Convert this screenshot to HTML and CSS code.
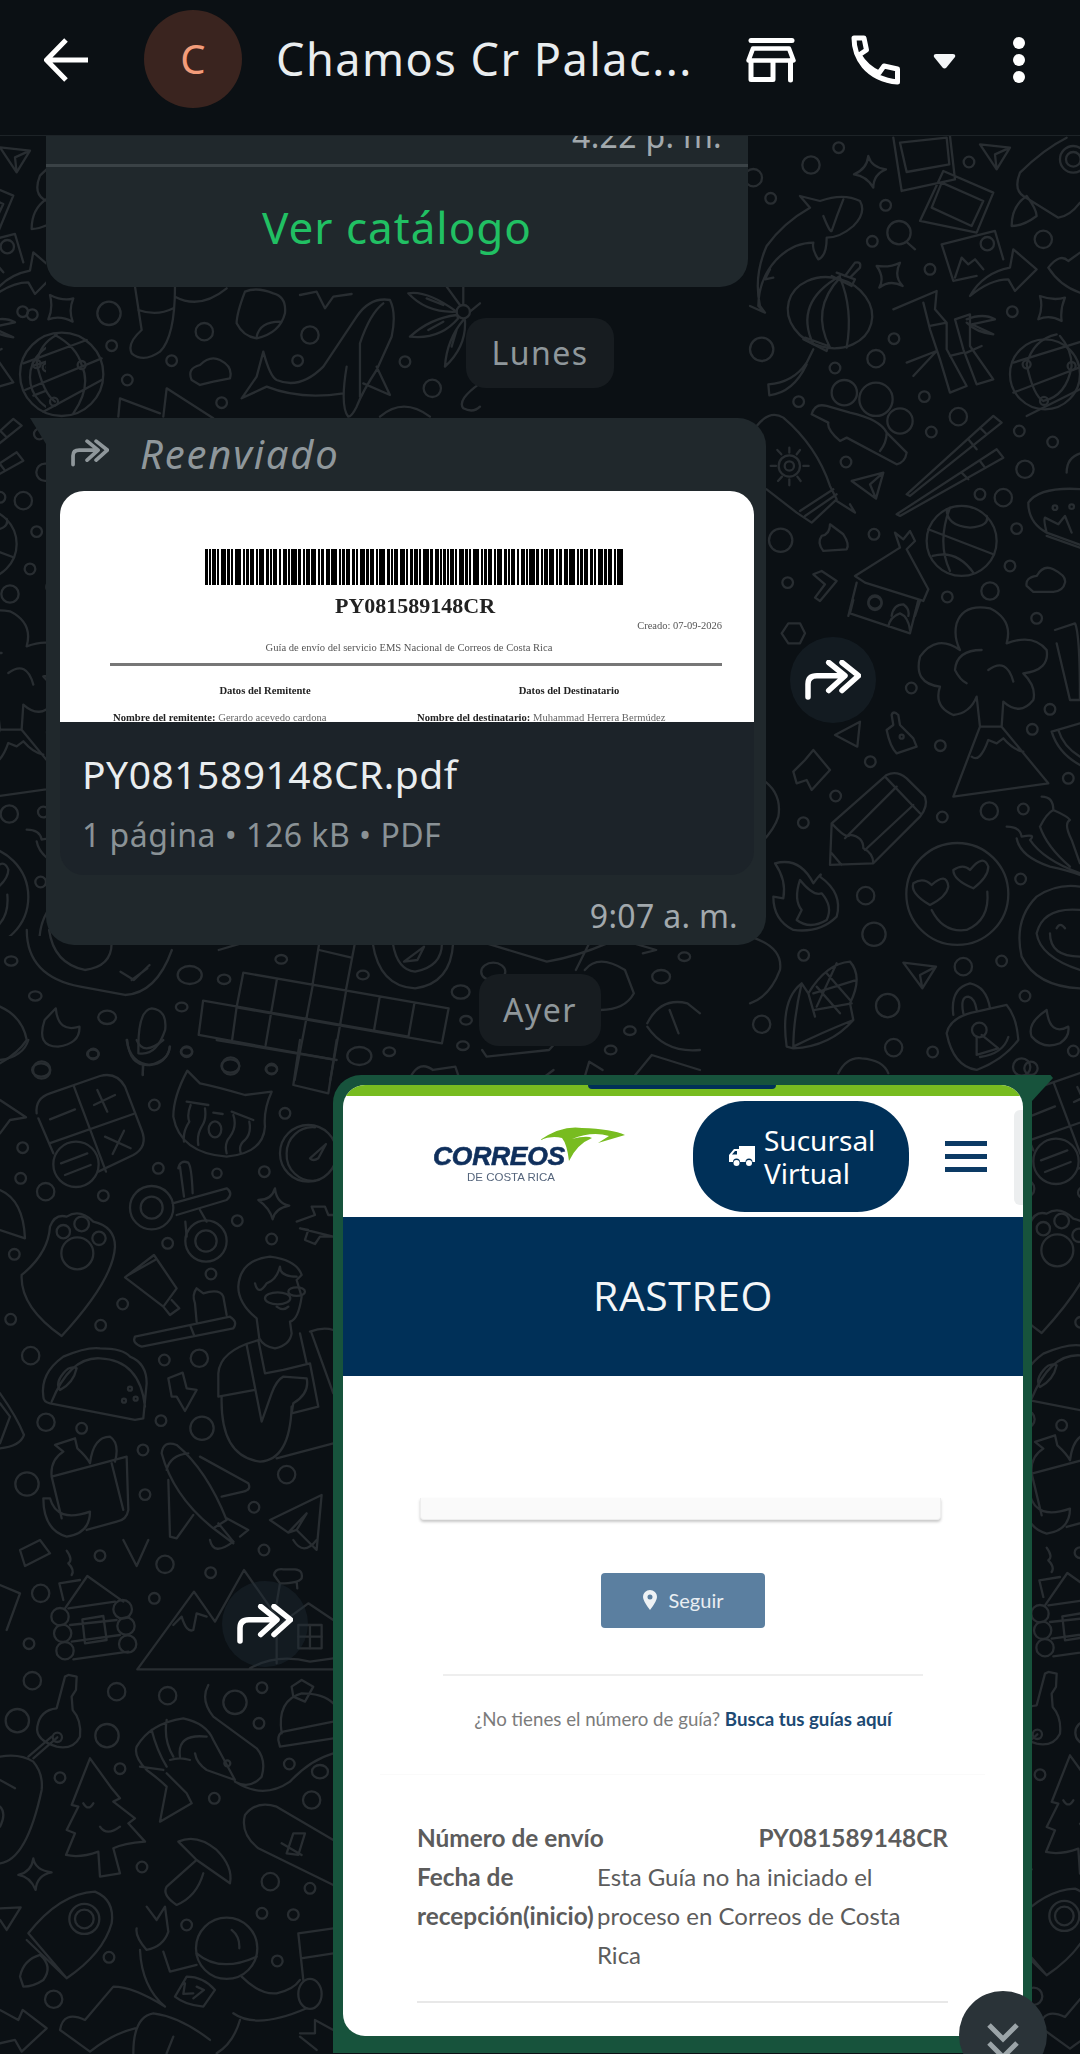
FILE: index.html
```html
<!DOCTYPE html>
<html lang="es">
<head>
  <meta charset="UTF-8">
  <meta name="viewport" content="width=device-width, initial-scale=1.0">
  <title>Chamos Cr Palac...</title>
  <link rel="stylesheet" href="styles.css">
</head>
<body>
  <svg width="0" height="0" class="defs">
    <symbol id="fwd" viewBox="0 0 56 40">
      <path d="M3 37V24Q3 15.700 12 15.700H38M23.700 2.500L40 15.700L23.700 30.500M37 2.500L53.500 15.700L37 30.500" fill="none" stroke="currentColor" stroke-width="5.500" stroke-linecap="round" stroke-linejoin="round"/>
    </symbol>
  </svg>

  <div class="screen">
    <!-- wallpaper, drawn in the pixel space of each part of the screen -->
    <svg class="doodles" width="1080" height="2054" viewBox="0 0 1080 2054">
      <g id="wall-left-top" transform="translate(0 1040) scale(.3333)">
        <path d="M110 220Q105 175 150 160L300 108Q350 95 375 140L425 270Q445 320 400 345L295 395M160 340L115 235M222 140L318 395M148 310L400 222M292 150L322 215M282 195L345 165M150 238L225 208M315 290L392 325M372 272L338 342M183 370L262 340M195 405L272 375"/>
        <circle cx="228" cy="373" r="68"/>
        <path d="M520 230Q520 170 562 92L600 130Q650 140 735 165L815 155Q790 210 795 260Q790 340 680 350Q540 340 520 230ZM560 185L625 195M695 215L760 240M572 195Q560 225 568 245Q548 275 552 305M615 205Q620 240 605 260Q590 285 595 315M700 225Q712 260 690 290Q672 310 680 340M748 245Q755 280 735 300Q715 315 722 338M640 218L668 222"/>
        <ellipse cx="645" cy="268" rx="19" ry="24"/>
        <circle cx="925" cy="340" r="85"/>
        <path d="M945 262A78 78 0 0 0 860 340A78 78 0 0 0 945 422M930 355L978 312L955 355Q940 365 930 355Z"/>
        <circle cx="455" cy="503" r="65"/><circle cx="455" cy="503" r="33"/>
        <circle cx="618" cy="603" r="62"/><circle cx="618" cy="603" r="32"/>
        <path d="M518 490L680 445Q702 460 680 480L530 525M535 385Q540 358 565 368Q575 380 578 460M600 510L620 545M556 545L560 590M540 380L552 470"/>
        <path d="M825 445Q830 490 868 497Q825 505 818 538Q810 505 775 480Q815 480 825 445Z"/>
        <path d="M890 545L945 525L935 500L975 500L985 525L1000 525M1000 590L960 590L945 612L915 600L925 570L900 565Z"/>
        <path d="M65 705Q145 640 150 560Q165 520 200 530Q240 505 280 545Q345 560 345 620Q340 720 185 888Q60 800 65 705Z"/>
        <circle cx="190" cy="575" r="20"/><circle cx="245" cy="552" r="22"/><circle cx="297" cy="595" r="20"/><circle cx="232" cy="640" r="48"/>
        <path d="M462 645L375 712L490 800L530 745ZM490 800L510 825L538 805L515 780M385 705L465 660"/>
        <path d="M405 890L690 830Q715 845 700 865L425 920Q395 910 405 890ZM572 860L582 885M590 845L585 790Q575 765 590 745L610 760Q660 745 670 770L680 825"/>
        <path d="M770 835Q715 790 715 740Q720 660 810 650Q890 660 905 705L890 720L905 770Q895 840 870 845L875 880Q870 915 825 925Q790 920 778 895L770 835M765 730Q775 770 800 730Q830 720 840 680Q840 710 890 710M830 800Q850 815 865 800"/>
        <ellipse cx="833" cy="775" rx="38" ry="18"/><ellipse cx="890" cy="755" rx="25" ry="13"/>
        <path d="M778 900Q660 930 655 1000L655 1070L765 1050M665 1070Q660 1250 780 1265Q870 1260 875 1100M740 915L785 1145L815 1060Q830 1020 850 1010L920 1015Q930 1060 880 1090L875 1120L955 1100L930 970L850 990L795 1000L775 900M900 880L920 970M930 875Q970 860 1000 870M935 880L1000 1060M830 1255L1000 1210"/>
        <path d="M130 1070Q120 1000 190 950Q260 920 300 925Q370 925 390 950Q440 970 440 1030L430 1135L405 1140L150 1090Q130 1085 130 1070ZM155 1085Q210 950 300 955Q420 960 435 1100M190 1000Q165 1030 180 1050Q220 1030 230 985Q210 975 190 1000Z"/>
        <circle cx="390" cy="1046" r="6"/><circle cx="372" cy="1082" r="6"/><circle cx="407" cy="1076" r="6"/>
        <path d="M505 1015L548 998L560 1045L590 1050L555 1113L530 1070L515 1070Z"/>
        <path d="M155 1310L380 1250L385 1410Q380 1440 350 1445L260 1470M185 1435L155 1310Q150 1260 190 1235L165 1215L225 1195L232 1225Q260 1250 270 1270Q280 1190 330 1190Q360 1210 345 1265M335 1270L370 1410M130 1375L150 1375Q170 1450 270 1415Q270 1480 200 1490Q130 1470 130 1375Z"/>
        <path d="M485 1240Q490 1200 530 1215Q620 1290 680 1440L640 1465Q520 1370 485 1240ZM600 1250L745 1330Q755 1350 730 1355L665 1370M505 1320L510 1490L530 1495L580 1425M500 1290Q510 1245 565 1240M640 1465L700 1510M655 1450L700 1505M680 1435L745 1470L720 1490"/>
        <path d="M810 1440L965 1365L950 1530L890 1470L865 1478ZM865 1478L920 1420L890 1470"/>
        <path d="M650 0L1010 60M900 0L880 135L985 160L1010 0M0 60Q70 50 85 0M380 0Q390 70 450 75Q500 70 510 20M430 75L428 105M410 0Q430 50 490 0"/>
        <path d="M0 180L78 232L30 240L0 280M0 450Q70 480 75 595L0 570M0 1060Q50 1130 72 1185Q60 1220 0 1225M0 1090L30 1130L0 1210"/>
        <circle cx="125" cy="90" r="26"/><circle cx="280" cy="42" r="16"/><circle cx="560" cy="35" r="16"/><circle cx="692" cy="78" r="26"/><circle cx="815" cy="87" r="16"/><circle cx="463" cy="195" r="16"/><circle cx="855" cy="220" r="16"/><circle cx="68" cy="323" r="16"/><circle cx="62" cy="415" r="16"/><circle cx="137" cy="455" r="26"/><circle cx="310" cy="467" r="16"/><circle cx="475" cy="385" r="16"/><circle cx="651" cy="400" r="14"/><circle cx="793" cy="395" r="16"/><circle cx="712" cy="542" r="16"/><circle cx="503" cy="610" r="16"/><circle cx="815" cy="597" r="16"/><circle cx="43" cy="643" r="16"/><circle cx="633" cy="702" r="16"/><circle cx="368" cy="792" r="16"/><circle cx="32" cy="838" r="16"/><circle cx="302" cy="856" r="16"/><circle cx="92" cy="947" r="26"/><circle cx="493" cy="960" r="16"/><circle cx="598" cy="955" r="26"/><circle cx="138" cy="1147" r="26"/><circle cx="245" cy="1165" r="16"/><circle cx="483" cy="1142" r="16"/><circle cx="606" cy="1165" r="35"/><circle cx="429" cy="1230" r="16"/><circle cx="81" cy="1332" r="35"/><circle cx="435" cy="1364" r="16"/><circle cx="860" cy="1304" r="26"/><circle cx="762" cy="1402" r="16"/>
      </g>

      <g id="wall-left-bottom" transform="translate(0 1540) scale(.3333)">
        <path d="M195 205L262 108L370 185M200 32Q220 60 205 70Q225 90 215 105M190 180L178 130L240 120M205 205L345 185M210 255L350 240M215 305L360 285M220 358L385 335M247 238L310 228L320 300L255 310Z"/>
        <circle cx="180" cy="230" r="26"/><circle cx="188" cy="280" r="26"/><circle cx="195" cy="332" r="26"/><circle cx="368" cy="208" r="28"/><circle cx="378" cy="258" r="26"/><circle cx="383" cy="312" r="26"/>
        <path d="M412 388L582 155L645 245L732 90L830 230M412 388L1000 388M520 255L545 230Q560 280 580 270L590 220L620 230M822 105Q825 85 850 88L885 88Q910 90 905 115Q895 130 840 130ZM840 130L830 190M890 125L892 145M1000 240L925 190L830 260L830 370M930 255V325M895 290H965M750 385Q830 340 930 365L1000 355"/>
        <rect x="895" y="255" width="70" height="70"/>
        <path d="M205 405L230 410L228 450L215 470L218 510Q245 540 240 590Q220 630 170 620Q105 600 112 560Q120 510 170 505L195 410ZM172 592L100 655M155 590L85 650"/>
        <circle cx="172" cy="592" r="14"/>
        <path d="M0 650Q60 640 100 665Q130 700 125 750Q80 960 0 970M0 720L45 745M0 860Q20 820 0 800"/>
        <path d="M100 955Q105 990 155 997Q110 1005 107 1050Q90 1010 55 1005Q95 995 100 955Z"/>
        <path d="M270 655L335 745L360 775L340 785L405 835L385 850L435 905Q370 910 340 925L360 1000L300 1010L295 935Q240 955 198 945L225 880L200 870L235 800L215 795ZM250 790Q265 815 280 790M300 860Q320 890 360 860"/>
        <path d="M440 690Q400 650 410 620Q450 550 550 535Q620 550 640 600L705 720L620 690Q590 670 585 640M440 690Q480 720 500 740L480 845L575 790L560 760L500 700M500 540Q490 600 520 650M455 570Q470 630 500 680M420 680L490 690M540 650Q530 580 620 590M510 660Q540 650 570 660"/>
        <circle cx="682" cy="670" r="9"/>
        <path d="M625 435Q600 480 640 530L770 625Q800 660 785 710Q750 750 705 725Q790 780 870 725Q930 660 1000 640"/>
        <ellipse cx="960" cy="695" rx="24" ry="20"/>
        <path d="M845 580Q830 480 905 460Q970 460 1000 490M835 600Q835 580 850 575L1000 545M840 620L1000 595M835 600L840 620M875 440L905 420L940 440L915 485L880 470Z"/>
        <path d="M1000 900L830 800Q770 780 735 825Q720 880 775 925L1000 1035M880 880L915 880L895 945L860 940ZM845 910L905 945"/>
        <path d="M535 905Q590 880 650 930Q700 980 690 1030L590 960ZM590 960L500 1040Q485 1065 530 1095Q590 1070 610 1000"/>
        <path d="M85 1180Q180 1060 285 1055Q345 1080 335 1150Q310 1240 200 1315ZM80 1200L200 1315M60 1310Q70 1260 120 1245Q160 1280 130 1320Q100 1340 70 1340Z"/>
        <circle cx="253" cy="1137" r="45"/><circle cx="253" cy="1137" r="28"/>
        <circle cx="680" cy="1225" r="92"/>
        <path d="M590 1240Q660 1300 770 1250M695 1170Q720 1190 718 1225M440 1100L470 1140L495 1100L505 1175Q490 1220 440 1230Q405 1190 410 1165M420 1230Q425 1340 495 1400M490 1235L510 1295L590 1275M495 1400Q400 1340 340 1340L255 1440Q190 1410 180 1470L270 1535Q340 1480 405 1465M400 1540Q400 1430 460 1420Q540 1430 630 1500M725 1310Q780 1365 830 1360Q880 1350 900 1320M700 1420Q770 1470 920 1405M895 1180L1000 1165M895 1180L910 1320M903 1255L1000 1240M500 1540L520 1490M720 1440Q700 1510 650 1540M525 1370L560 1310Q610 1310 645 1350L610 1400Q555 1395 525 1370ZM555 1330L550 1362L580 1360M590 1340L612 1350L580 1375"/>
        <ellipse cx="930" cy="1362" rx="35" ry="45"/>
        <path d="M0 1410L55 1440L68 1410L140 1465L65 1535L45 1500L0 1510M900 1480L945 1480L945 1440L1000 1470M900 1490L950 1530"/>
        <path d="M0 1105L62 1102L20 1170L0 1140M0 135L60 160L20 270"/>
        <path d="M60 30L120 0L150 40L75 78ZM630 0Q640 50 700 5M880 0Q910 50 950 0M370 0L410 78L445 0"/>
        <circle cx="122" cy="160" r="26"/><circle cx="300" cy="47" r="16"/><circle cx="495" cy="73" r="26"/><circle cx="632" cy="98" r="16"/><circle cx="792" cy="30" r="16"/><circle cx="463" cy="175" r="16"/><circle cx="87" cy="311" r="16"/><circle cx="97" cy="422" r="26"/><circle cx="350" cy="455" r="26"/><circle cx="503" cy="467" r="26"/><circle cx="705" cy="487" r="35"/><circle cx="786" cy="443" r="16"/><circle cx="777" cy="550" r="16"/><circle cx="52" cy="542" r="35"/><circle cx="321" cy="587" r="35"/><circle cx="180" cy="713" r="16"/><circle cx="360" cy="686" r="16"/><circle cx="868" cy="672" r="16"/><circle cx="935" cy="780" r="26"/><circle cx="643" cy="775" r="16"/><circle cx="426" cy="981" r="16"/><circle cx="811" cy="1025" r="26"/><circle cx="930" cy="1045" r="16"/><circle cx="786" cy="1120" r="16"/><circle cx="880" cy="1124" r="16"/><circle cx="560" cy="1155" r="16"/><circle cx="327" cy="1252" r="16"/><circle cx="832" cy="1263" r="16"/><circle cx="161" cy="1378" r="26"/>
      </g>

      <g id="wall-right-top" transform="translate(750 136) scale(.3333)">
        <path d="M30 510Q10 420 50 330Q100 260 180 215L150 180Q190 190 210 195Q280 170 330 195Q350 230 310 270Q270 305 230 305Q230 360 205 370Q185 340 190 320Q130 320 80 370Q25 430 25 510L45 530ZM220 240Q240 290 245 285Q260 240 280 190M0 510L45 530M60 400L45 430L70 425"/>
        <circle cx="447" cy="290" r="35"/>
        <path d="M470 318L495 340M355 60Q365 95 408 100Q370 115 370 155Q350 120 312 115Q350 100 355 60ZM380 390Q420 395 450 380Q430 420 458 450Q420 430 388 455Q405 425 380 390ZM430 5L455 165L615 130L600 0M450 20L590 5L598 85L470 108ZM580 105L730 170L680 290L510 255ZM575 140L700 195L665 270L545 215ZM575 325L735 285L760 370M575 325L610 435L680 420M615 425L635 365L655 385L675 370L700 400M660 480Q700 410 780 395L790 340L860 400L795 465L775 430Q720 430 660 480Z"/>
        <circle cx="712" cy="323" r="20"/>
        <ellipse cx="240" cy="530" rx="128" ry="105" transform="rotate(15 240 530)"/>
        <path d="M190 625Q130 500 270 420M240 635Q180 520 270 425M290 635Q310 520 270 425M160 610L230 645L235 630L165 605M245 420L305 450L315 430L260 410M285 420L315 380Q335 375 330 395L300 425M190 640L170 680Q130 740 55 745L58 778Q130 770 170 685"/>
        <path d="M430 520L560 465L555 520L590 560L590 640L650 750L600 770L570 670L540 580L520 500M615 550L660 535L660 630L730 730L680 745L640 640ZM470 680L560 645L490 720M540 570L590 560M600 660L640 650M650 650L695 630M650 550Q700 530 735 550L665 565L730 595Q680 590 650 560"/>
        <circle cx="885" cy="715" r="105"/>
        <path d="M790 680L1000 615M790 770L1000 690M830 840L990 760M830 685Q850 780 880 795M965 690Q950 780 880 795M830 685Q850 610 920 595M965 690Q965 640 930 600"/>
        <circle cx="830" cy="685" r="12"/><circle cx="965" cy="690" r="12"/><circle cx="882" cy="795" r="12"/>
        <circle cx="283" cy="770" r="38"/><circle cx="378" cy="790" r="50"/><circle cx="450" cy="855" r="38"/>
        <path d="M185 835Q195 800 230 810L300 830Q390 850 410 890L470 950Q465 980 440 985L290 905L270 915Q230 880 235 860ZM410 890Q410 920 390 945M20 870Q60 820 100 845Q200 930 240 1050L260 1090L185 1160L140 1130L50 1060M150 1125L250 1060M165 1140L260 1075M260 1095L315 1130L300 1105"/>
        <circle cx="118" cy="990" r="32"/><circle cx="118" cy="990" r="14"/>
        <path d="M118 935V950M118 1030V1048M62 990H78M160 990H176M82 942L94 955M150 942L140 955M84 1035L96 1022M152 1035L142 1022"/>
        <path d="M470 1075L730 840L755 860L480 1080ZM655 910L680 940M690 875L710 895M440 1135L740 940L760 965L450 1140ZM635 1010L655 1030M690 975L705 995"/>
        <circle cx="635" cy="1215" r="105"/>
        <path d="M535 1180L730 1255M590 1120Q590 1170 660 1175Q720 1170 710 1140M548 1260Q620 1240 670 1310M600 1115Q560 1220 600 1305"/>
        <path d="M305 1035L400 1010L378 1088ZM378 1088L360 1045L400 1010M315 1320L450 1235L435 1190L460 1210L480 1185L495 1215L470 1240L535 1360L520 1395L345 1340ZM320 1340L295 1440M510 1395L495 1440M425 1440Q430 1405 460 1405Q480 1420 475 1440"/>
        <circle cx="375" cy="1398" r="20"/>
        <path d="M830 1350Q825 1325 860 1320Q880 1285 910 1300Q950 1320 945 1340Q940 1365 910 1368L850 1368ZM835 1100Q870 1050 1000 1060M835 1100Q835 1160 890 1190L1000 1230M890 1190Q880 1150 885 1145L925 1165L945 1140L965 1190M890 1200L990 1235M950 1010Q950 960 1000 950"/>
        <circle cx="915" cy="1115" r="7"/><circle cx="965" cy="1112" r="7"/>
        <path d="M810 110Q880 40 950 5M810 110Q790 160 820 180L925 245Q960 240 990 200M785 270Q785 210 830 180Q860 220 860 240Q820 270 785 270Z"/>
        <circle cx="970" cy="70" r="40"/><circle cx="970" cy="70" r="22"/>
        <path d="M690 25L780 35L740 100ZM740 100L735 55L780 35M870 480Q910 495 945 485Q930 520 935 555Q900 535 865 550Q880 515 870 480ZM895 395Q930 350 955 375L990 350M895 395Q930 450 990 470"/>
        <path d="M240 1165Q260 1180 280 1195Q300 1225 290 1240L220 1245Q200 1220 215 1200Q240 1195 240 1165ZM190 1315L215 1305L260 1335L210 1395L195 1385L225 1345Z"/>
        <circle cx="10" cy="125" r="26"/><circle cx="183" cy="87" r="26"/><circle cx="266" cy="35" r="16"/><circle cx="657" cy="78" r="16"/><circle cx="62" cy="187" r="16"/><circle cx="407" cy="208" r="16"/><circle cx="367" cy="316" r="16"/><circle cx="540" cy="400" r="16"/><circle cx="880" cy="310" r="26"/><circle cx="787" cy="527" r="16"/><circle cx="432" cy="608" r="16"/><circle cx="35" cy="640" r="35"/><circle cx="378" cy="668" r="26"/><circle cx="255" cy="696" r="16"/><circle cx="523" cy="782" r="16"/><circle cx="146" cy="797" r="16"/><circle cx="625" cy="842" r="26"/><circle cx="544" cy="888" r="16"/><circle cx="808" cy="885" r="16"/><circle cx="908" cy="918" r="16"/><circle cx="288" cy="978" r="16"/><circle cx="825" cy="1000" r="26"/><circle cx="690" cy="1075" r="16"/><circle cx="760" cy="1085" r="26"/><circle cx="800" cy="1178" r="16"/><circle cx="92" cy="1213" r="35"/><circle cx="372" cy="1195" r="16"/><circle cx="113" cy="1340" r="16"/><circle cx="780" cy="1290" r="16"/><circle cx="720" cy="1365" r="26"/><circle cx="592" cy="1383" r="16"/>
      </g>

      <g id="wall-right-bottom" transform="translate(750 600) scale(.3333)">
        <path d="M630 150Q560 100 510 170Q490 250 570 260Q550 320 610 345Q660 340 680 290L690 380L610 590L895 550L755 380L760 305Q810 350 850 300Q860 260 820 220Q900 210 890 150Q850 100 770 130Q790 60 720 25Q640 10 620 70Q610 110 630 150M695 150Q620 150 615 210Q630 240 650 250M715 210Q770 170 790 245M690 380L755 380M665 470Q690 490 715 420L740 430L760 415Q790 450 820 455"/>
        <path d="M240 795L245 670L410 525Q440 510 470 535L525 590Q535 620 510 650L370 790ZM405 530L510 640M285 715L440 560M345 750L490 615M245 670Q290 720 300 705Q340 710 340 745Q370 760 370 790M245 760L275 795"/>
        <path d="M75 790Q150 770 190 850Q220 810 210 830Q280 880 260 950Q210 1000 130 990Q70 960 70 890L100 895Q110 840 75 790ZM150 840Q130 900 155 930L140 960Q180 990 230 960Q250 920 215 880Q190 890 150 840Z"/>
        <circle cx="622" cy="882" r="153"/>
        <path d="M540 915Q480 880 490 850Q520 830 545 855Q590 815 595 860Q590 890 540 915ZM670 865Q610 840 610 810Q640 790 660 810Q700 760 715 800Q715 830 670 865ZM545 930Q580 1000 650 990Q720 960 712 875"/>
        <path d="M990 1165Q860 1160 815 1070Q790 960 860 890Q920 850 990 860M990 930Q880 920 860 1000Q870 1070 990 1110M900 1000Q900 1070 990 1070M920 985Q930 965 945 985"/>
        <path d="M425 345Q430 330 445 345L450 375L490 415L500 440L440 460Q420 440 410 390L430 375Z"/>
        <circle cx="455" cy="410" r="6"/>
        <path d="M130 515L165 480L190 450L240 510L185 570L170 540L140 550Z"/>
        <path d="M110 1340Q90 1200 155 1150L175 1180Q230 1090 300 1085Q340 1130 300 1210L310 1260Q240 1340 130 1345ZM155 1150Q130 1260 130 1340M175 1180L195 1250M195 1230L305 1210M190 1180L320 1140M230 1120L300 1200M200 1160L270 1240M130 1340Q210 1300 310 1260M260 1090L200 1220"/>
        <path d="M590 1300Q600 1250 680 1235L770 1215Q800 1250 805 1320Q760 1380 680 1410Q610 1400 590 1300ZM610 1245Q600 1165 660 1150Q710 1160 720 1225M640 1240Q630 1190 655 1190Q675 1195 680 1230M680 1310L680 1365L745 1345L695 1305"/>
        <circle cx="688" cy="1290" r="22"/>
        <path d="M890 1230Q830 1270 845 1310Q880 1350 930 1330Q960 1310 955 1280Q900 1310 890 1230ZM770 680Q810 680 815 710Q860 700 840 720Q880 780 990 820M800 715Q810 770 900 800Q950 810 990 825M875 590Q910 590 910 630Q955 650 960 660Q940 670 965 720L990 790M870 680Q890 640 910 630M870 680Q890 740 960 800M460 1088L558 1100L517 1165ZM517 1165L510 1125L558 1100M95 100L115 70L150 70L165 100L150 130L115 130ZM0 1010Q100 1040 90 1110Q60 1190 0 1210M0 520Q100 560 85 650Q70 700 0 760M300 40L480 100L505 0M310 0L300 40M415 80Q420 50 450 40Q475 50 480 90M255 405L330 365L322 440ZM915 90L975 70Q990 100 990 300L960 300L920 130M905 395L990 370M905 395Q925 460 990 495M925 390Q940 440 990 470M265 1420Q290 1370 335 1375Q400 1380 415 1420"/>
        <circle cx="375" cy="10" r="20"/><circle cx="484" cy="264" r="16"/><circle cx="900" cy="328" r="16"/><circle cx="847" cy="388" r="16"/><circle cx="571" cy="437" r="16"/><circle cx="361" cy="485" r="16"/><circle cx="955" cy="535" r="16"/><circle cx="257" cy="588" r="16"/><circle cx="160" cy="668" r="16"/><circle cx="577" cy="651" r="16"/><circle cx="718" cy="633" r="26"/><circle cx="820" cy="627" r="16"/><circle cx="860" cy="55" r="16"/><circle cx="812" cy="837" r="16"/><circle cx="347" cy="887" r="26"/><circle cx="372" cy="1003" r="35"/><circle cx="161" cy="1066" r="16"/><circle cx="640" cy="1100" r="26"/><circle cx="755" cy="1083" r="16"/><circle cx="413" cy="1217" r="35"/><circle cx="35" cy="1273" r="26"/><circle cx="431" cy="1343" r="26"/><circle cx="548" cy="1356" r="16"/><circle cx="825" cy="1188" r="16"/><circle cx="843" cy="1405" r="20"/>
      </g>

      <g transform="translate(0 280) scale(.3333)">
        <circle cx="185" cy="283" r="125"/>
        <path d="M70 250L260 180M75 330L305 235M130 395L305 300M110 250Q130 340 165 365M245 255Q275 320 220 400M110 250Q120 190 170 165M245 255Q230 200 165 165M150 45Q190 65 220 55Q205 90 218 125Q180 105 145 118Q160 85 150 45ZM405 20L425 150Q380 190 395 220Q430 250 480 215Q525 170 525 20M415 90Q470 110 520 85M525 50Q600 90 680 25M735 35Q710 100 710 130Q730 170 770 175Q840 160 855 100Q860 50 820 40Q770 20 735 35ZM770 170Q780 125 840 125M790 215Q810 290 830 300Q900 330 970 260L1070 110Q1110 50 1170 60Q1190 100 1175 170L1130 270Q1090 330 1070 380Q1055 410 1045 410Q1020 380 1040 260M790 215L770 290L725 355L800 320Q900 360 1030 340M1080 190L1080 350M1130 260L1170 345L1090 310M1080 190Q1110 100 1150 70M1370 95Q1280 30 1225 40Q1280 100 1370 95ZM1370 105Q1290 115 1230 170Q1320 180 1375 115ZM1390 120Q1340 180 1335 260Q1400 200 1395 120ZM1280 55L1330 75M1285 150L1330 125M1355 200L1370 150M1340 20L1380 75M1390 20V75M1410 95L1440 70M575 300Q560 265 600 255Q630 225 660 240Q700 260 690 295L640 305L600 315ZM360 355L480 400M360 355L355 410M490 410L500 325L640 415M900 45L950 35L975 85L1000 50L1055 42M1440 310Q1370 360 1390 385Q1420 400 1440 380M1140 410Q1210 350 1290 410"/>
        <circle cx="1390" cy="95" r="20"/>
        <circle cx="110" cy="252" r="12"/><circle cx="245" cy="255" r="12"/><circle cx="162" cy="365" r="12"/>
        <circle cx="68" cy="95" r="16"/><circle cx="327" cy="100" r="35"/><circle cx="335" cy="197" r="16"/><circle cx="382" cy="300" r="16"/><circle cx="613" cy="155" r="26"/><circle cx="515" cy="242" r="16"/><circle cx="930" cy="165" r="26"/><circle cx="893" cy="242" r="16"/><circle cx="1215" cy="245" r="16"/><circle cx="1297" cy="325" r="26"/><circle cx="665" cy="368" r="16"/>
      </g>

      <g transform="translate(0 930) scale(.4464 .3333)">
        <path d="M60 0Q60 140 180 170L280 195Q350 190 385 60M110 0Q120 100 190 120Q250 110 250 40M270 125L300 150L335 105M295 150L330 115M100 270Q80 350 130 350Q180 340 178 290Q130 310 125 235ZM0 230Q50 260 60 330Q40 370 0 400M310 350Q310 240 340 235Q375 240 370 300Q350 380 310 370ZM285 330Q290 410 335 405Q380 390 380 350M320 405V435"/>
        <path d="M545 128L1005 235L990 340L530 232M545 128L530 232M455 212L445 315L745 388M455 212L915 320M530 232L520 330M620 150L595 345M700 170L660 450M775 185L740 450M850 205L838 300M928 222L915 320M715 40L700 165M795 40L775 180M715 60L785 82M1080 360L1090 380L1230 360L1240 345"/>
        <path d="M835 40Q850 170 930 175Q1010 160 1015 40M880 40Q890 120 930 125Q990 110 990 40M905 95L950 50L935 90Z"/>
        <path d="M1090 40L1225 95Q1290 80 1360 40M1320 40L1290 120M1310 120Q1340 70 1400 120L1420 190Q1400 240 1345 240M1450 280Q1480 200 1540 220L1568 250M1500 240L1520 310M1450 290Q1490 370 1568 360M1420 440L1460 375L1568 420M920 440Q940 390 970 420L1020 410L1030 450M1220 440L1240 420M1310 440L1320 395L1350 420M490 60L540 40M1420 40L1470 60L1440 70"/>
        <circle cx="25" cy="93" r="14"/><circle cx="79" cy="198" r="14"/><circle cx="240" cy="262" r="20"/><circle cx="208" cy="372" r="13"/><circle cx="92" cy="420" r="20"/><circle cx="425" cy="135" r="27"/><circle cx="502" cy="148" r="14"/><circle cx="630" cy="88" r="13"/><circle cx="813" cy="135" r="13"/><circle cx="407" cy="231" r="13"/><circle cx="418" cy="365" r="13"/><circle cx="516" cy="408" r="20"/><circle cx="608" cy="418" r="13"/><circle cx="805" cy="378" r="27"/><circle cx="872" cy="365" r="13"/><circle cx="1032" cy="186" r="20"/><circle cx="1044" cy="271" r="13"/><circle cx="1037" cy="347" r="13"/><circle cx="1105" cy="125" r="27"/><circle cx="1481" cy="140" r="20"/><circle cx="1533" cy="80" r="13"/><circle cx="1411" cy="302" r="13"/><circle cx="1368" cy="360" r="13"/>
      </g>

      <!-- the pattern repeats about every 980px, so the thin side strips reuse the far side -->
      <use href="#wall-left-top" x="980" y="-3"/>
      <use href="#wall-left-bottom" x="980" y="-3"/>
      <svg x="0" y="136" width="46" height="800"><g transform="translate(-980 -133)">
        <use href="#wall-right-top"/>
        <use href="#wall-right-bottom"/>
      </g></svg>
    </svg>

    <header class="topbar">
      <svg class="back" width="44" height="44" viewBox="0 0 44 44"><path d="M44 22H3M22 2L2.500 22L22 42" fill="none" stroke="#fff" stroke-width="5" stroke-linejoin="round"/></svg>
      <div class="avatar">C</div>
      <div class="title">Chamos Cr Palac...</div>
      <div class="actions">
        <svg class="shop" width="50" height="46" viewBox="0 0 50 46">
          <path d="M5 2.500H46" fill="none" stroke="#fff" stroke-width="5" stroke-linecap="round"/>
          <path d="M7 10.500H43L47.500 22.500H2.500Z" fill="none" stroke="#fff" stroke-width="4.500" stroke-linejoin="round"/>
          <path d="M5 23V41.500H27V23" fill="none" stroke="#fff" stroke-width="5" stroke-linejoin="round"/>
          <path d="M44.500 23V42" fill="none" stroke="#fff" stroke-width="5" stroke-linecap="round"/>
        </svg>
        <svg class="phone" width="50" height="50" viewBox="0 0 50 50"><path d="M3 3H13L15.500 15L8 20Q15 32 28 38L33 31L46.500 34V47Q25 45 13 31Q3 19 3 3Z" fill="none" stroke="#fff" stroke-width="5" stroke-linejoin="round"/></svg>
        <svg class="caret" width="23" height="15" viewBox="0 0 23 15"><path d="M1 3Q0 0 3 0H20Q23 0 22 3L13.500 13.500Q11.500 15.500 9.500 13.500Z" fill="#f4f6f8"/></svg>
        <div class="dots"><span></span><span></span><span></span></div>
      </div>
    </header>

    <main class="chat">
      <div class="bubble bubble-catalog">
        <div class="time time-cut">4:22 p. m.</div>
        <div class="catalog-link">Ver catálogo</div>
      </div>

      <div class="day-chip">Lunes</div>

      <div class="bubble bubble-doc">
        <div class="forwarded">
          <svg width="38" height="28"><use href="#fwd"/></svg>
          <em>Reenviado</em>
        </div>
        <div class="doc-preview">
          <div class="doc-page">
            <svg class="barcode" width="420" height="36"><line x1="0" y1="18" x2="420" y2="18"/></svg>
            <div class="doc-code">PY081589148CR</div>
            <div class="doc-date">Creado: 07-09-2026</div>
            <div class="doc-sub">Guía de envío del servicio EMS Nacional de Correos de Costa Rica</div>
            <div class="doc-rule"></div>
            <div class="doc-cols">
              <div class="doc-col"><b>Datos del Remitente</b><span><b>Nombre del remitente:</b> Gerardo acevedo cardona</span></div>
              <div class="doc-col"><b>Datos del Destinatario</b><span><b>Nombre del destinatario:</b> Muhammad Herrera Bermúdez</span></div>
            </div>
          </div>
        </div>
        <div class="doc-info">
          <div class="doc-name">PY081589148CR.pdf</div>
          <div class="doc-meta">1 página • 126 kB • PDF</div>
        </div>
        <div class="time">9:07 a. m.</div>
      </div>

      <div class="day-chip day-chip-small">Ayer</div>

      <div class="bubble-out">
        <div class="shot">
          <div class="shot-strip"><span></span></div>
          <div class="site-head">
            <div class="logo">
              <svg class="swoosh" width="90" height="36" viewBox="0 0 90 36"><path d="M0 13Q22 -2 42 1Q72 2 85 8L58 16L69 9Q52 4 32 12Q47 8 52 11Q37 17 29 34Q27 17 22 11Q12 8 0 13Z" fill="#78bc20"/></svg>
              <div class="logo-name">CORREOS</div>
              <div class="logo-sub">DE COSTA RICA</div>
            </div>
            <div class="branch-btn">
              <svg width="26" height="22" viewBox="0 0 26 22"><path d="M26 0V16H23.500A3.500 3.500 0 0 0 16.500 16H11A3.500 3.500 0 0 0 4 16H0V9L5 3H10V0Z" fill="#fff"/><path d="M3 8.500L6 5H8V8.500Z" fill="#003058"/><circle cx="7.500" cy="17" r="3" fill="#fff"/><circle cx="20" cy="17" r="3" fill="#fff"/></svg>
              <span>Sucursal<br>Virtual</span>
            </div>
            <div class="burger"><span></span><span></span><span></span></div>
            <div class="site-scroll"></div>
          </div>
          <div class="site-band">RASTREO</div>
          <div class="site-body">
            <div class="input-end"></div>
            <div class="track-btn">
              <svg width="14" height="20" viewBox="0 0 14 20"><path fill-rule="evenodd" d="M7 0A7 7 0 0 1 14 7Q14 11 7 20Q0 11 0 7A7 7 0 0 1 7 0ZM7 4.500A2.500 2.500 0 1 0 7 9.500A2.500 2.500 0 1 0 7 4.500Z" fill="#eef2f5"/></svg>
              Seguir
            </div>
            <div class="site-rule"></div>
            <p class="site-hint">¿No tienes el número de guía? <b>Busca tus guías aquí</b></p>
            <div class="site-rule-faint"></div>
            <div class="track-table">
              <b class="track-nowrap">Número de envío</b><b class="track-code">PY081589148CR</b>
              <b>Fecha de recepción(inicio)</b><span>Esta Guía no ha iniciado el proceso en Correos de Costa Rica</span>
            </div>
            <div class="table-rule"></div>
          </div>
        </div>
      </div>
    </main>

    <div class="fwd-btn fwd-btn-doc"><svg width="56" height="40"><use href="#fwd"/></svg></div>
    <div class="fwd-btn fwd-btn-shot"><svg width="56" height="40"><use href="#fwd"/></svg></div>
    <div class="scroll-down">
      <svg width="34" height="40" viewBox="0 0 34 40"><path d="M3 3L17 17L31 3M3 21L17 35L31 21" fill="none" stroke="#9ba4a8" stroke-width="5"/></svg>
    </div>
  </div>
</body>
</html>
```

FILE: styles.css
```css
body {
  margin: 0;
  background-color: #0b1014;
  font-family: "Noto Sans", sans-serif;
}
.defs {
  position: absolute;
}
.screen {
  position: relative;
  width: 1080px;
  height: 2054px;
  overflow: hidden;
  display: flex;
  flex-direction: column;
  background-color: #0b1014;
}
.doodles {
  position: absolute;
  left: 0;
  top: 0;
}
.doodles path,
.doodles circle,
.doodles ellipse,
.doodles rect {
  fill: none;
  stroke: #282d31;
  stroke-width: 2.3px;
  stroke-linejoin: round;
  stroke-linecap: round;
  vector-effect: non-scaling-stroke;
}

/* top bar */
.topbar {
  position: relative;
  z-index: 2;
  height: 136px;
  box-sizing: border-box;
  flex: none;
  display: flex;
  align-items: flex-start;
  padding: 10px 0 0 44px;
  background-color: #0b1014;
  border-bottom: 1px solid #1d2327;
}
.back {
  margin-top: 28px;
}
.avatar {
  width: 98px;
  height: 98px;
  margin-left: 56px;
  border-radius: 50%;
  background-color: #3a241f;
  color: #f39c7a;
  font-size: 40px;
  line-height: 98px;
  text-align: center;
}
.title {
  margin-left: 34px;
  color: #e9edef;
  font-size: 45px;
  letter-spacing: 1.500px;
  line-height: 98px;
  white-space: nowrap;
}
.actions {
  flex: 1;
  display: flex;
  align-items: flex-start;
  justify-content: flex-end;
  padding: 27px 55px 0 0;
}
.shop {
  margin-top: 1px;
}
.phone {
  margin: -2px 0 0 55px;
}
.caret {
  margin: 17px 0 0 32px;
}
.dots {
  margin: 0 0 0 57px;
  width: 12px;
  display: flex;
  flex-direction: column;
  gap: 5px;
}
.dots span {
  width: 12px;
  height: 12px;
  border-radius: 50%;
  background-color: #fff;
}

/* messages */
.chat {
  position: relative;
  flex: 1;
  overflow: hidden;
  display: flex;
  flex-direction: column;
}
.bubble {
  position: relative;
  box-sizing: border-box;
  margin-left: 46px;
  background-color: #20282c;
  border-radius: 0 0 28px 28px;
}
.time {
  color: #a2a9ad;
  font-size: 32px;
  letter-spacing: .3px;
  line-height: 40px;
  text-align: right;
}
.bubble-catalog {
  width: 702px;
  height: 171px;
  margin-top: -20px;
  flex: none;
}
.time-cut {
  height: 48px;
  padding-right: 26px;
  border-bottom: 3px solid #3a4246;
}
.catalog-link {
  color: #21c063;
  font-size: 44px;
  letter-spacing: 1px;
  line-height: 120px;
  text-align: center;
}
.day-chip {
  align-self: center;
  flex: none;
  width: 148px;
  height: 70px;
  margin-top: 31px;
  border-radius: 20px;
  background-color: #171c20;
  color: #8f979b;
  font-size: 32px;
  letter-spacing: 1.500px;
  line-height: 70px;
  text-align: center;
}
.day-chip-small {
  width: 122px;
  height: 72px;
  margin-top: 29px;
  line-height: 72px;
}
.bubble-doc {
  width: 720px;
  height: 527px;
  flex: none;
  margin-top: 30px;
  padding: 0 12px 0 14px;
  border-radius: 28px;
  border-top-left-radius: 0;
}
.bubble-doc::before {
  content: "";
  position: absolute;
  left: -16px;
  top: 0;
  width: 16px;
  height: 26px;
  background-color: #20282c;
  clip-path: polygon(0 0, 100% 0, 100% 100%);
}
.forwarded {
  height: 70px;
  margin-bottom: 3px;
  display: flex;
  align-items: center;
  gap: 31px;
  padding-left: 11px;
  color: #8f979b;
  font-size: 40px;
  letter-spacing: 1.800px;
}
.doc-preview {
  height: 231px;
  overflow: hidden;
  background-color: #fff;
  border-radius: 24px 24px 0 0;
}
.doc-page {
  position: relative;
  height: 231px;
  padding-top: 58px;
  box-sizing: border-box;
  text-align: center;
  font-family: "Liberation Serif", serif;
  color: #222;
  filter: blur(.6px);
}
.barcode {
  display: block;
  margin-left: 145px;
}
.barcode line {
  stroke: #000;
  stroke-width: 36px;
  stroke-dasharray: 3 1 2 1 4 1 2 2 5 1 3 1 2 2 6 2 2 1 3 1 4 2 2 1 5 2 3 1 2 1 4 2 2 2 4 1 2 1 6 1 3 2 2 1 4 1 5 2 2 1 3 2 4 1 6 2 2 1 3 1 4 2 3 1 2 2 5 1 3 1 4 2 2 1 6 2 3 1 2 1 4 2 5 1 2 2 3 1 4 1 2 2 6 1 3 2 4 1 2 1;
}
.doc-code {
  margin: 6px 0 0 16px;
  font-size: 22px;
  font-weight: bold;
  line-height: 30px;
}
.doc-date {
  padding-right: 32px;
  font-size: 10.500px;
  line-height: 10px;
  text-align: right;
  color: #555;
}
.doc-sub {
  margin-top: 11px;
  padding-left: 4px;
  font-size: 10.600px;
  line-height: 12px;
  color: #555;
}
.doc-rule {
  height: 3px;
  margin: 9px 32px 0 50px;
  background-color: #777;
}
.doc-cols {
  display: flex;
  margin-top: 19px;
  padding-left: 53px;
}
.doc-col {
  width: 304px;
  display: flex;
  flex-direction: column;
  font-size: 10.600px;
  line-height: 12px;
  gap: 15px;
}
.doc-col span {
  text-align: left;
  color: #666;
  white-space: nowrap;
}
.doc-col span b {
  color: #222;
}
.doc-info {
  height: 153px;
  box-sizing: border-box;
  padding: 29px 0 0 22px;
  background-color: #1c2329;
  border-radius: 0 0 24px 24px;
}
.doc-name {
  color: #e9edef;
  font-size: 39px;
  letter-spacing: .5px;
  line-height: 46px;
}
.doc-meta {
  margin-top: 18px;
  color: #8a9296;
  font-size: 32px;
  letter-spacing: .5px;
  line-height: 40px;
}
.bubble-doc .time {
  margin-top: 21px;
  padding-right: 16px;
}
.bubble-out {
  position: relative;
  flex: none;
  box-sizing: border-box;
  width: 699px;
  margin: 29px 0 0 333px;
  padding: 10px 9px 17px 10px;
  background-color: #17533c;
  border-radius: 28px 0 0 0;
}
.bubble-out::after {
  content: "";
  position: absolute;
  right: -21px;
  top: 0;
  width: 21px;
  height: 26px;
  background-color: #17533c;
  clip-path: polygon(0 0, 88% 0, 100% 12%, 0 100%);
}

/* screenshot inside the outgoing message */
.shot {
  height: 951px;
  overflow: hidden;
  background-color: #fff;
  border-radius: 22px;
  font-family: Lato, sans-serif;
  filter: blur(.4px);
}
.shot-strip {
  height: 11px;
  background-color: #78bc20;
  display: flex;
  justify-content: center;
}
.shot-strip span {
  width: 188px;
  height: 4px;
  margin-left: -2px;
  background-color: #003058;
  border-radius: 0 0 14px 14px;
}
.site-head {
  position: relative;
  height: 121px;
  display: flex;
  align-items: flex-start;
}
.logo {
  position: relative;
  width: 350px;
  padding: 46px 0 0 90px;
  box-sizing: border-box;
  font-family: "Liberation Sans", sans-serif;
  color: #0f2f5c;
}
.swoosh {
  position: absolute;
  left: 197px;
  top: 31px;
}
.logo-name {
  font-size: 26.500px;
  font-weight: bold;
  font-style: italic;
  line-height: 29px;
  letter-spacing: -.3px;
  -webkit-text-stroke: .6px #0f2f5c;
}
.logo-sub {
  padding-left: 34px;
  color: #55657c;
  font-size: 11.500px;
  line-height: 13px;
}
.branch-btn {
  width: 216px;
  height: 111px;
  margin: 5px 0 0 0;
  display: flex;
  align-items: center;
  gap: 9px;
  padding-left: 36px;
  box-sizing: border-box;
  background-color: #003058;
  border-radius: 52px;
  color: #fff;
  font-family: "Noto Sans", sans-serif;
  font-size: 28px;
  line-height: 33px;
}
.burger {
  margin: 45px 0 0 36px;
  width: 42px;
  display: flex;
  flex-direction: column;
  gap: 8px;
}
.burger span {
  height: 5px;
  background-color: #0c3a64;
}
.site-scroll {
  position: absolute;
  right: 0;
  top: 14px;
  width: 9px;
  height: 95px;
  background-color: #eceeef;
  border-radius: 6px 0 0 6px;
}
.site-band {
  height: 159px;
  background-color: #003058;
  color: #f3f6f8;
  font-family: "Open Sans", sans-serif;
  font-size: 41px;
  letter-spacing: .5px;
  line-height: 157px;
  text-align: center;
}
.site-body {
  height: 660px;
  padding-top: 122px;
  box-sizing: border-box;
}
.input-end {
  width: 521px;
  height: 22px;
  margin-left: 77px;
  box-sizing: border-box;
  background-color: #fafafa;
  border: 1px solid #eee;
  border-top: 0;
  border-radius: 0 0 4px 4px;
  box-shadow: 0 2px 3px rgba(0, 0, 0, .22);
}
.track-btn {
  width: 164px;
  height: 55px;
  margin: 53px 0 0 258px;
  display: flex;
  align-items: center;
  justify-content: center;
  gap: 12px;
  padding-bottom: 2px;
  box-sizing: border-box;
  background-color: #5b7fa0;
  border-radius: 4px;
  color: #e9eef2;
  font-size: 20px;
}
.site-rule {
  height: 2px;
  margin: 46px 0 0 100px;
  width: 480px;
  background-color: #eeeeee;
}
.site-hint {
  margin: 29px 0 0 0;
  color: #7b7b7b;
  font-size: 18.700px;
  line-height: 28px;
  text-align: center;
}
.site-hint b {
  color: #1d4a73;
}
.site-rule-faint {
  height: 1px;
  margin: 41px 0 0 37px;
  width: 605px;
  background-color: #fafafa;
}
.track-table {
  display: grid;
  grid-template-columns: 180px 351px;
  margin: 43px 0 0 74px;
  color: #5c5c5c;
  font-size: 24px;
  line-height: 39px;
}
.track-table b {
  font-size: 24.400px;
}
.track-nowrap {
  white-space: nowrap;
}
.track-code {
  text-align: right;
}
.table-rule {
  height: 2px;
  width: 531px;
  margin: 27px 0 0 74px;
  background-color: #e8e8e8;
}

/* round buttons over the chat */
.fwd-btn {
  position: absolute;
  z-index: 1;
  width: 86px;
  height: 86px;
  display: flex;
  align-items: center;
  justify-content: center;
  border-radius: 50%;
  background-color: rgba(32, 44, 52, .42);
  color: #fff;
}
.fwd-btn-doc {
  left: 790px;
  top: 637px;
}
.fwd-btn-shot {
  left: 222px;
  top: 1581px;
}
.scroll-down {
  position: absolute;
  z-index: 1;
  left: 959px;
  top: 1991px;
  width: 88px;
  height: 88px;
  padding-top: 31px;
  box-sizing: border-box;
  border-radius: 50%;
  background-color: #2a3338;
  text-align: center;
}
```
